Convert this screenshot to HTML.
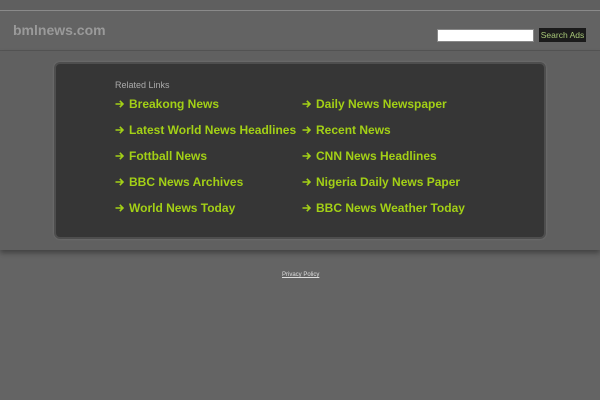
<!DOCTYPE html>
<html><head><style>
body{margin:0;width:600px;height:400px;background:#646464;font-family:"Liberation Sans",sans-serif;position:relative;overflow:hidden}
.top{position:absolute;left:0;top:0;width:600px;height:10px;background:#5f5f5f;border-bottom:1px solid #8a8a8a}
.hdr{position:absolute;left:0;top:11px;width:600px;height:39px;background:#636363;border-bottom:1px solid #555}
.logo{position:absolute;left:13px;top:11px;font-size:14px;font-weight:bold;color:#9a9a9a}
.inp{position:absolute;left:437px;top:29px;width:95px;height:11px;background:#fff;border:1px solid #888}
.btn{position:absolute;left:539px;top:28px;width:47px;height:14px;background:#1b1b1b;color:#a8c878;font-size:8.5px;line-height:14px;text-align:center}
.main{position:absolute;left:0;top:51px;width:600px;height:199px;background:#606060;box-shadow:0 3px 5px rgba(0,0,0,.35)}
.box{position:absolute;left:54px;top:62px;width:488px;height:173px;background:#363636;border:2px solid #4e4e4e;border-radius:6px;box-shadow:0 0 2px #777}
.rl{position:absolute;left:115px;top:80px;font-size:9px;color:#aaa}
.l{position:absolute;font-size:12px;font-weight:bold;color:#a3d016;white-space:nowrap;padding-left:15px}
.l svg{position:absolute;left:1px;top:3px}
.pp{position:absolute;left:282px;top:272px;font-size:6px;color:#ddd;text-decoration:underline}
</style></head><body>
<svg width="0" height="0" style="position:absolute"><defs><symbol id="a" viewBox="0 0 9 8"><path d="M0.5 4H8M4.8 0.8L8 4L4.8 7.2" stroke="#a3d016" stroke-width="1.6" fill="none"/></symbol></defs></svg>
<div class="top"></div>
<div class="hdr"><div class="logo">bmlnews.com</div></div>
<div class="inp"></div><div class="btn">Search Ads</div>
<div class="main"></div>
<div class="box"></div>
<div class="rl">Related Links</div>
<div class="l" style="left:114px;top:97px"><svg width="9" height="8"><use href="#a"/></svg>Breakong News</div>
<div class="l" style="left:114px;top:123px"><svg width="9" height="8"><use href="#a"/></svg>Latest World News Headlines</div>
<div class="l" style="left:114px;top:149px"><svg width="9" height="8"><use href="#a"/></svg>Fottball News</div>
<div class="l" style="left:114px;top:175px"><svg width="9" height="8"><use href="#a"/></svg>BBC News Archives</div>
<div class="l" style="left:114px;top:201px"><svg width="9" height="8"><use href="#a"/></svg>World News Today</div>
<div class="l" style="left:301px;top:97px"><svg width="9" height="8"><use href="#a"/></svg>Daily News Newspaper</div>
<div class="l" style="left:301px;top:123px"><svg width="9" height="8"><use href="#a"/></svg>Recent News</div>
<div class="l" style="left:301px;top:149px"><svg width="9" height="8"><use href="#a"/></svg>CNN News Headlines</div>
<div class="l" style="left:301px;top:175px"><svg width="9" height="8"><use href="#a"/></svg>Nigeria Daily News Paper</div>
<div class="l" style="left:301px;top:201px"><svg width="9" height="8"><use href="#a"/></svg>BBC News Weather Today</div>
<div class="pp">Privacy Policy</div>
</body></html>
